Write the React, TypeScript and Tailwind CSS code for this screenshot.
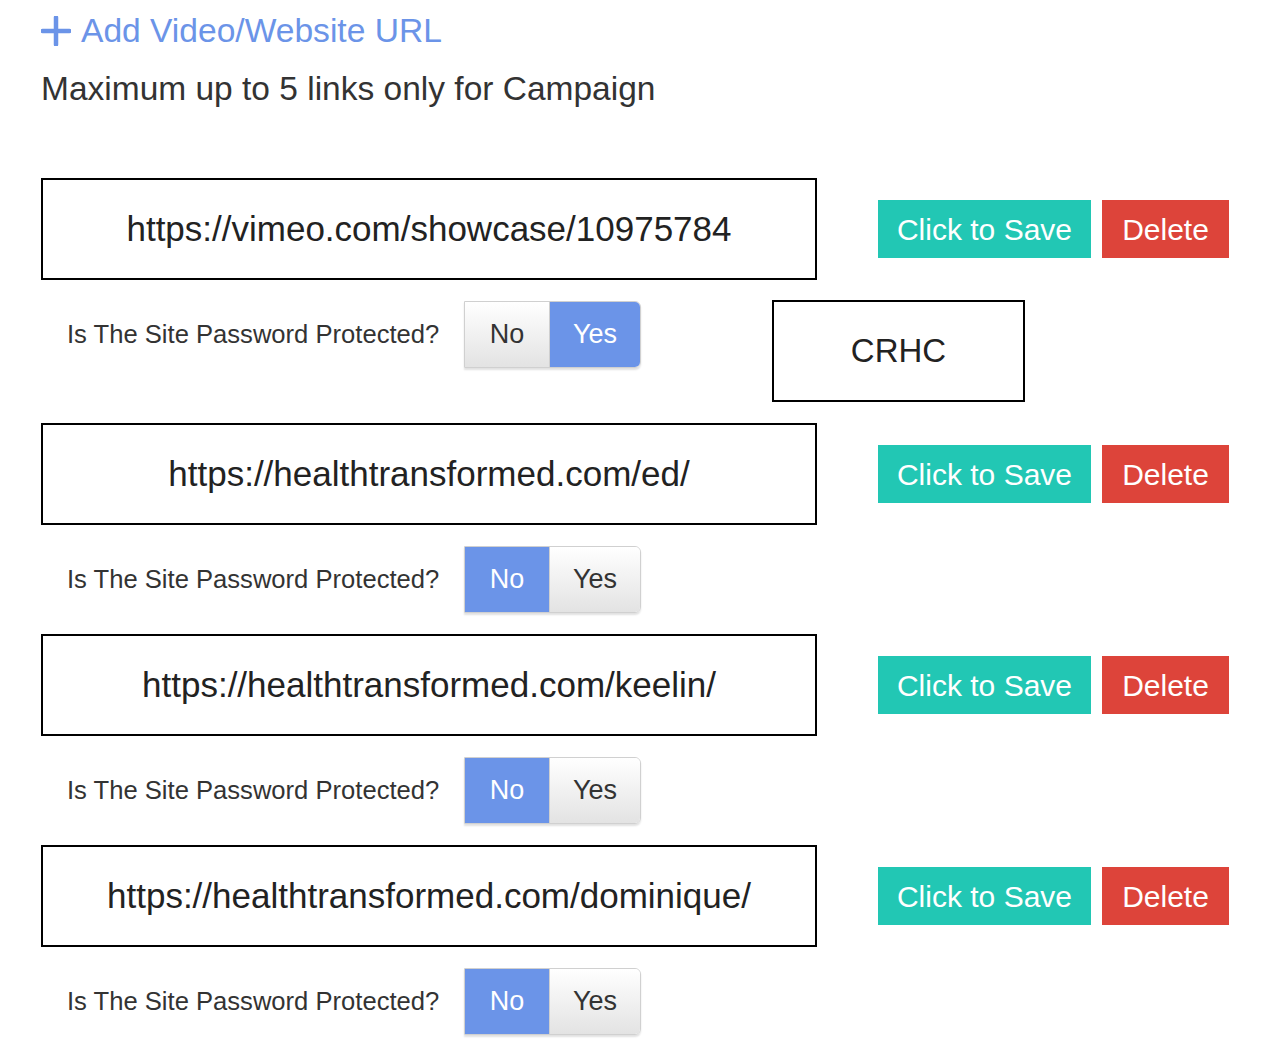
import React from "react";

const font = { fontFamily: '"Liberation Sans", Arial, sans-serif' };

function Toggle({ yes }: { yes: boolean }) {
  const active = "bg-[#6b94e8] text-white";
  const inactive = "bg-gradient-to-b from-[#ffffff] to-[#e3e3e3] text-[#333]";
  return (
    <div className="flex h-[67px] w-[177px] rounded-r-[6px] border border-[#d0d0d0] shadow-[0_2px_2px_rgba(0,0,0,0.12)] overflow-hidden">
      <div className={`w-[85px] flex items-center justify-center text-[27px] border-r border-[#cfcfcf] ${yes ? inactive : active}`}>No</div>
      <div className={`flex-1 flex items-center justify-center text-[27px] ${yes ? active : inactive}`}>Yes</div>
    </div>
  );
}

function Block({ url, yes, extra }: { url: string; yes: boolean; extra?: boolean }) {
  return (
    <div className="flex flex-col">
      <div className="flex items-center">
        <div className="w-[776px] h-[102px] border-2 border-black flex items-center justify-center text-[35px] text-[#222]">
          {url}
        </div>
        <div className="flex gap-[11px] ml-[61px]">
          <button className="w-[213px] h-[58px] bg-[#22c7b4] text-white text-[30px]">Click to Save</button>
          <button className="w-[127px] h-[58px] bg-[#dd443a] text-white text-[30px]">Delete</button>
        </div>
      </div>
      <div className="flex items-start mt-[21px] mb-[21px]">
        <div className="h-[67px] flex items-center pl-[26px] w-[423px] text-[25.6px] text-[#333]">
          Is The Site Password Protected?
        </div>
        <Toggle yes={yes} />
        {extra && (
          <div className="ml-[131px] -mt-[1px] w-[253px] h-[102px] border-2 border-black flex items-center justify-center text-[33px] text-[#222]">
            CRHC
          </div>
        )}
      </div>
    </div>
  );
}

export default function App() {
  return (
    <div className="w-[1266px] h-[1058px] bg-white pl-[41px] overflow-hidden" style={font}>
      <div className="flex items-center h-[62px] text-[33.6px] text-[#6b94e8]">
        <svg width="30" height="30" viewBox="0 0 30 30" className="mr-[10px]">
          <path d="M15 1.5v27M1.5 15h27" stroke="#6b94e8" strokeWidth="4.5" strokeLinecap="round" />
        </svg>
        <span>Add Video/Website URL</span>
      </div>
      <div className="text-[33.5px] text-[#333] leading-[54px]">Maximum up to 5 links only for Campaign</div>
      <div className="mt-[62px]">
        <Block url="https://vimeo.com/showcase/10975784" yes extra />
        <Block url="https://healthtransformed.com/ed/" yes={false} />
        <Block url="https://healthtransformed.com/keelin/" yes={false} />
        <Block url="https://healthtransformed.com/dominique/" yes={false} />
      </div>
    </div>
  );
}
